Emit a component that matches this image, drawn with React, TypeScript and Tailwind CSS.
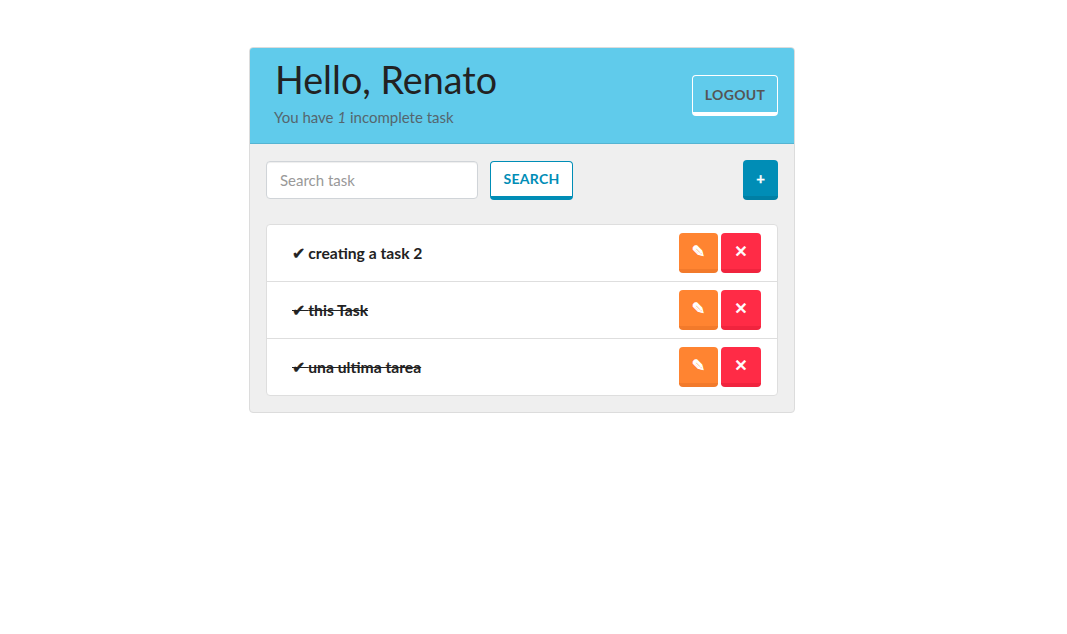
import React from "react";

const font = { fontFamily: '"Lato", "Noto Sans", sans-serif' };

function Row({ text, done, last }: { text: string; done?: boolean; last?: boolean }) {
  return (
    <div className={`flex items-center justify-between pl-[25px] pr-4 ${last ? "h-[56px]" : "h-[57px] border-b border-[#dedede]"}`}>
      <span className={`text-[15.7px] font-bold text-[#222] pt-[2px] ${done ? "line-through" : ""}`}>
        <span className="font-['DejaVu_Sans'] text-[16px] mr-[-1px] [-webkit-text-stroke:0.3px_#222]">✔</span> {text}
      </span>
      <div className="flex gap-[3px]">
        <button className="w-[39px] h-10 rounded-[4px] bg-[#ff8431] border-b-4 border-[#f27a2b] text-white text-[16px] font-bold font-['DejaVu_Sans'] pt-[2px] [-webkit-text-stroke:0.6px_white]">✎</button>
        <button className="w-10 h-10 rounded-[4px] bg-[#ff2b46] border-b-4 border-[#f0243e] text-white text-[16px] font-bold font-['DejaVu_Sans'] pt-[2px] [-webkit-text-stroke:0.6px_white]">✕</button>
      </div>
    </div>
  );
}

export default function App() {
  return (
    <div className="min-h-[634px] bg-white pt-[47px] pl-[249px]" style={font}>
      <div className="w-[546px] h-[366px] rounded-[4px] border border-[#dcdcdc] bg-[#efefef] overflow-hidden">
        <div className="h-[96px] bg-[#60cbeb] border-b border-[#55b4d2] flex items-center justify-between pl-[25px] pr-4">
          <div>
            <h1 className="text-[37.7px] leading-[40px] text-[#222] mt-[-5px]">Hello, Renato</h1>
            <p className="text-[15px] leading-5 text-[#55666e] mt-[7px] ml-[-1px]">You have <em>1</em> incomplete task</p>
          </div>
          <button className="w-[86px] h-[41px] rounded-[4px] border border-white border-b-4 text-[14px] font-bold text-[#555] tracking-[0.3px]">LOGOUT</button>
        </div>
        <div className="px-4 pt-4">
          <div className="flex items-center">
            <input
              placeholder="Search task"
              className="w-[212px] h-[38px] rounded-[4px] border border-[#d0d4d8] bg-white px-[13px] text-[15px] placeholder:text-[#999] outline-none shadow-[inset_0_1px_1px_rgba(0,0,0,0.07)]"
            />
            <button className="ml-3 w-[83px] h-[39px] rounded-[4px] border border-[#008db6] border-b-4 bg-white text-[14px] font-bold text-[#008db6] tracking-[0.3px] mt-[1px] pb-[2px]">SEARCH</button>
            <button className="ml-auto w-[35px] h-10 rounded-[4px] bg-[#008db6] border-b-4 border-[#007fa4] text-white text-[15px] font-bold [-webkit-text-stroke:0.3px_white]">+</button>
          </div>
          <div className="mt-[24px] w-[512px] rounded-[4px] border border-[#dedede] bg-white">
            <Row text="creating a task 2" />
            <Row text="this Task" done />
            <Row text="una ultima tarea" done last />
          </div>
        </div>
      </div>
    </div>
  );
}
